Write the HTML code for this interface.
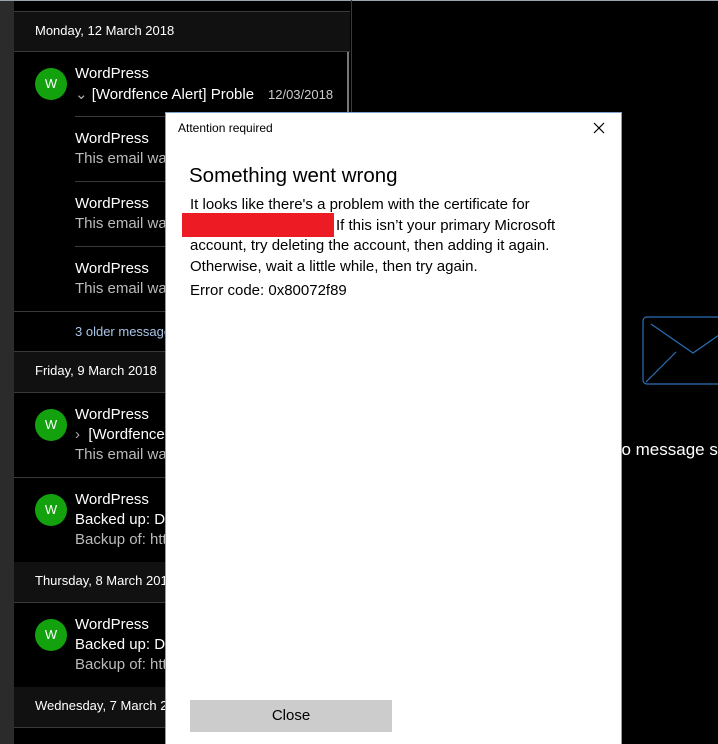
<!DOCTYPE html>
<html><head><meta charset="utf-8"><style>
*{margin:0;padding:0;box-sizing:border-box}
body{width:718px;height:744px;overflow:hidden;background:#000;position:relative;font-family:"Segoe UI","Liberation Sans","DejaVu Sans",sans-serif;}
.a{position:absolute;white-space:nowrap}
.strip{left:0;top:0;width:14px;height:744px;background:#2b2b2b}
.topl{left:0;top:0;width:718px;height:1px;background:#9aa4ad}
.list{left:14px;top:1px;width:337px;height:743px;background:#000}
.hdr{left:14px;width:336px;height:40px;background:#111;color:#fff;font-size:13px;padding:11px 0 0 21px}
.hl{height:1px;background:#3a3a3a}
.av{width:32px;height:32px;border-radius:50%;background:#13a10e;color:#fff;font-size:13px;text-align:center;line-height:32px}
.t{font-size:15px;color:#fff}
.g{font-size:15px;color:#bbb}
</style></head><body>
<div class="a strip"></div>
<div class="a list"></div>
<div class="a topl"></div>
<div class="a" style="left:351px;top:0;width:1px;height:744px;background:#3a3a3a"></div>
<div class="a" style="left:347px;top:28px;width:2px;height:300px;background:#777"></div>

<div class="a hl" style="left:14px;top:11px;width:336px"></div>
<div class="a hdr" style="top:12px">Monday, 12 March 2018</div>
<div class="a hl" style="left:14px;top:51px;width:336px"></div>
<div class="a av" style="left:35px;top:68px">W</div>
<div class="a t" style="left:75px;top:65px">WordPress</div>
<div class="a t" style="left:75px;top:85px"><span style="color:#aaa">&#8964;</span> [Wordfence Alert] Proble</div>
<div class="a" style="left:265px;top:87px;font-size:13px;color:#ccc;background:#000;padding-left:3px">12/03/2018</div>
<div class="a hl" style="left:75px;top:116px;width:275px"></div>
<div class="a t" style="left:75px;top:130px">WordPress</div>
<div class="a g" style="left:75px;top:150px">This email was</div>
<div class="a hl" style="left:75px;top:181px;width:275px"></div>
<div class="a t" style="left:75px;top:195px">WordPress</div>
<div class="a g" style="left:75px;top:215px">This email was</div>
<div class="a hl" style="left:75px;top:246px;width:275px"></div>
<div class="a t" style="left:75px;top:260px">WordPress</div>
<div class="a g" style="left:75px;top:280px">This email was</div>
<div class="a hl" style="left:14px;top:311px;width:336px"></div>
<div class="a" style="left:75px;top:324px;font-size:13px;color:#a9c4e6">3 older messages</div>
<div class="a hl" style="left:14px;top:351px;width:336px"></div>
<div class="a hdr" style="top:352px">Friday, 9 March 2018</div>
<div class="a hl" style="left:14px;top:392px;width:336px"></div>
<div class="a av" style="left:35px;top:409px">W</div>
<div class="a t" style="left:75px;top:406px">WordPress</div>
<div class="a t" style="left:75px;top:426px"><span style="color:#aaa">&#8250;</span>&nbsp; [Wordfence Alert]</div>
<div class="a g" style="left:75px;top:446px">This email was</div>
<div class="a hl" style="left:14px;top:477px;width:336px"></div>
<div class="a av" style="left:35px;top:494px">W</div>
<div class="a t" style="left:75px;top:491px">WordPress</div>
<div class="a t" style="left:75px;top:511px">Backed up: DB</div>
<div class="a g" style="left:75px;top:531px">Backup of: http</div>
<div class="a hl" style="left:14px;top:562px;width:336px"></div>
<div class="a hdr" style="top:562px">Thursday, 8 March 2018</div>
<div class="a hl" style="left:14px;top:602px;width:336px"></div>
<div class="a av" style="left:35px;top:619px">W</div>
<div class="a t" style="left:75px;top:616px">WordPress</div>
<div class="a t" style="left:75px;top:636px">Backed up: DB</div>
<div class="a g" style="left:75px;top:656px">Backup of: http</div>
<div class="a hl" style="left:14px;top:687px;width:336px"></div>
<div class="a hdr" style="top:687px">Wednesday, 7 March 2018</div>
<div class="a hl" style="left:14px;top:727px;width:336px"></div>

<svg class="a" style="left:630px;top:305px" width="88" height="90">
<g fill="none" stroke="#2a6fb5" stroke-width="1.2">
<rect x="13" y="12" width="100" height="67" rx="4"/>
<path d="M21 19 L63 48 L105 19"/>
<path d="M16 77 L46 47"/>
</g></svg>
<div class="a" style="left:612px;top:440px;font-size:17px;color:#fff">no message s</div>

<div class="a" style="left:165px;top:112px;width:457px;height:632px;background:#fff;border:1px solid #7aa2cc;border-bottom:none"></div>
<div class="a" style="left:178px;top:121px;font-size:12px;color:#000">Attention required</div>
<svg class="a" style="left:593px;top:122px" width="12" height="12"><path d="M1 1L11 11M11 1L1 11" stroke="#000" stroke-width="1.2"/></svg>
<div class="a" style="left:189px;top:164px;font-size:20.5px;color:#000">Something went wrong</div>
<div class="a" style="left:190px;top:195px;font-size:15px;color:#000;line-height:20.5px">It looks like there's a problem with the certificate for<br><span style="display:inline-block;width:146px"></span>If this isn’t your primary Microsoft<br>account, try deleting the account, then adding it again.<br>Otherwise, wait a little while, then try again.</div>
<div class="a" style="left:182px;top:213px;width:152px;height:24px;background:#ed1c24"></div>
<div class="a" style="left:190px;top:282px;font-size:15px;color:#000">Error code: 0x80072f89</div>
<div class="a" style="left:190px;top:700px;width:202px;height:32px;background:#ccc;color:#000;font-size:15px;text-align:center;line-height:32px">Close</div>
</body></html>
